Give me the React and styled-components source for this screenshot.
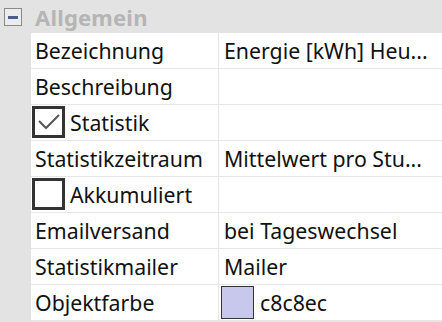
import React from "react";
import styled, { createGlobalStyle } from "styled-components";

const GlobalStyle = createGlobalStyle`
  html, body {
    margin: 0;
    padding: 0;
    background: #e3e3e3;
  }
  body {
    font-family: "Noto Sans", "Open Sans", sans-serif;
  }
`;

const Grid = styled.div`
  width: 442px;
  height: 322px;
  background: #e3e3e3;
  overflow: hidden;
`;

const GroupHeader = styled.div`
  display: flex;
  align-items: center;
  height: 33px;
  gap: 13px;
  padding-left: 4px;
`;

const Toggle = styled.div`
  width: 18px;
  height: 18px;
  box-sizing: border-box;
  border: 1px solid #8a8a8a;
  background: #ececec;
  display: flex;
  align-items: center;
  justify-content: center;
  margin-top: 1px;

  &::after {
    content: "";
    width: 10px;
    height: 3px;
    background: #4d5c88;
  }
`;

const GroupTitle = styled.span`
  font-size: 22px;
  font-weight: 700;
  color: #b5b5b5;
  letter-spacing: 0.2px;
`;

const Row = styled.div`
  display: grid;
  grid-template-columns: 187px 1px 1fr;
  margin-left: 31px;
  height: 36px;
  background: #fff;
  border-bottom: 1px solid #e6e6e6;
  box-sizing: border-box;
`;

const Divider = styled.div`
  background: #e6e6e6;
`;

const Cell = styled.div`
  display: flex;
  align-items: center;
  gap: 5px;
  padding-left: ${(p) => (p.$value ? 5 : 4)}px;
  font-size: 21.3px;
  color: #111;
  white-space: nowrap;
  overflow: hidden;
  padding-bottom: 1px;
`;

const Box = styled.div`
  width: 33px;
  height: 32px;
  box-sizing: border-box;
  border: 3px solid #333;
  background: #fff;
  flex: none;
  display: flex;
  align-items: center;
  justify-content: center;
  margin-left: -3px;
`;

const Swatch = styled.div`
  width: 33px;
  height: 33px;
  box-sizing: border-box;
  border: 1px solid #333;
  background: ${(p) => p.$color};
  flex: none;
  margin-left: -3px;
  margin-right: 1px;
`;

const Check = () => (
  <svg width="24" height="20" viewBox="0 0 24 20">
    <path d="M2 9 L9 16 L22 3" fill="none" stroke="#555" strokeWidth="2" />
  </svg>
);

const rows = [
  { label: "Bezeichnung", value: "Energie [kWh] Heu..." },
  { label: "Beschreibung", value: "" },
  { label: "Statistik", check: true, checked: true, value: "" },
  { label: "Statistikzeitraum", value: "Mittelwert pro Stu..." },
  { label: "Akkumuliert", check: true, checked: false, value: "" },
  { label: "Emailversand", value: "bei Tageswechsel" },
  { label: "Statistikmailer", value: "Mailer" },
  { label: "Objektfarbe", value: "c8c8ec", color: "#c8c8ec" },
];

export default function App() {
  return (
    <>
      <GlobalStyle />
      <Grid>
        <GroupHeader>
          <Toggle />
          <GroupTitle>Allgemein</GroupTitle>
        </GroupHeader>
        {rows.map((r) => (
          <Row key={r.label}>
            <Cell>
              {r.check && <Box>{r.checked && <Check />}</Box>}
              {r.label}
            </Cell>
            <Divider />
            <Cell $value>
              {r.color && <Swatch $color={r.color} />}
              {r.value}
            </Cell>
          </Row>
        ))}
      </Grid>
    </>
  );
}
